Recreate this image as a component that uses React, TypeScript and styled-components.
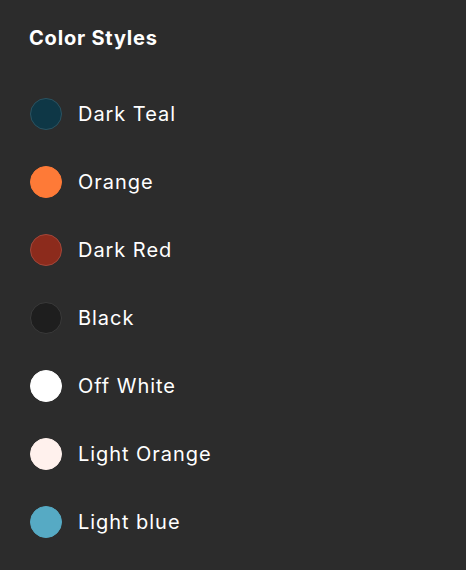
import React from "react";
import styled, { createGlobalStyle } from "styled-components";

const Global = createGlobalStyle`
  html, body { margin: 0; padding: 0; background: #2c2c2c; }
  body { font-family: Inter, "Noto Sans", sans-serif; -webkit-font-smoothing: antialiased; }
`;

const Panel = styled.div`
  width: 466px;
  height: 570px;
  box-sizing: border-box;
  background: #2c2c2c;
  padding: 26px 30px 0 30px;
  display: flex;
  flex-direction: column;
`;

const Title = styled.h2`
  margin: 0 0 0 -1px;
  font-size: 20px;
  line-height: 24px;
  font-weight: 700;
  letter-spacing: 0.8px;
  color: #ffffff;
`;

const List = styled.ul`
  list-style: none;
  margin: 48px 0 0 0;
  padding: 0;
  display: flex;
  flex-direction: column;
  gap: 36px;
`;

const Row = styled.li`
  display: flex;
  align-items: center;
  gap: 16px;
  height: 32px;
`;

const Swatch = styled.span<{ $color: string; $ring: string }>`
  width: 32px;
  height: 32px;
  border-radius: 50%;
  box-sizing: border-box;
  background: ${(p) => p.$color};
  border: 1px solid ${(p) => p.$ring};
  flex-shrink: 0;
`;

const Label = styled.span`
  font-size: 20px;
  line-height: 24px;
  font-weight: 400;
  letter-spacing: 0.95px;
  color: #ffffff;
`;

const colors = [
  { name: "Dark Teal", color: "#0e3746", ring: "#2b5361" },
  { name: "Orange", color: "#fe7a37", ring: "#fe7a37" },
  { name: "Dark Red", color: "#8c2b1c", ring: "#a2473a" },
  { name: "Black", color: "#1e1e1e", ring: "#3a3a3a" },
  { name: "Off White", color: "#ffffff", ring: "#ffffff" },
  { name: "Light Orange", color: "#fff1ed", ring: "#fff1ed" },
  { name: "Light blue", color: "#56aac4", ring: "#56aac4" },
];

export default function App() {
  return (
    <>
      <Global />
      <Panel>
        <Title>Color Styles</Title>
        <List>
          {colors.map((c) => (
            <Row key={c.name}>
              <Swatch $color={c.color} $ring={c.ring} />
              <Label>{c.name}</Label>
            </Row>
          ))}
        </List>
      </Panel>
    </>
  );
}
